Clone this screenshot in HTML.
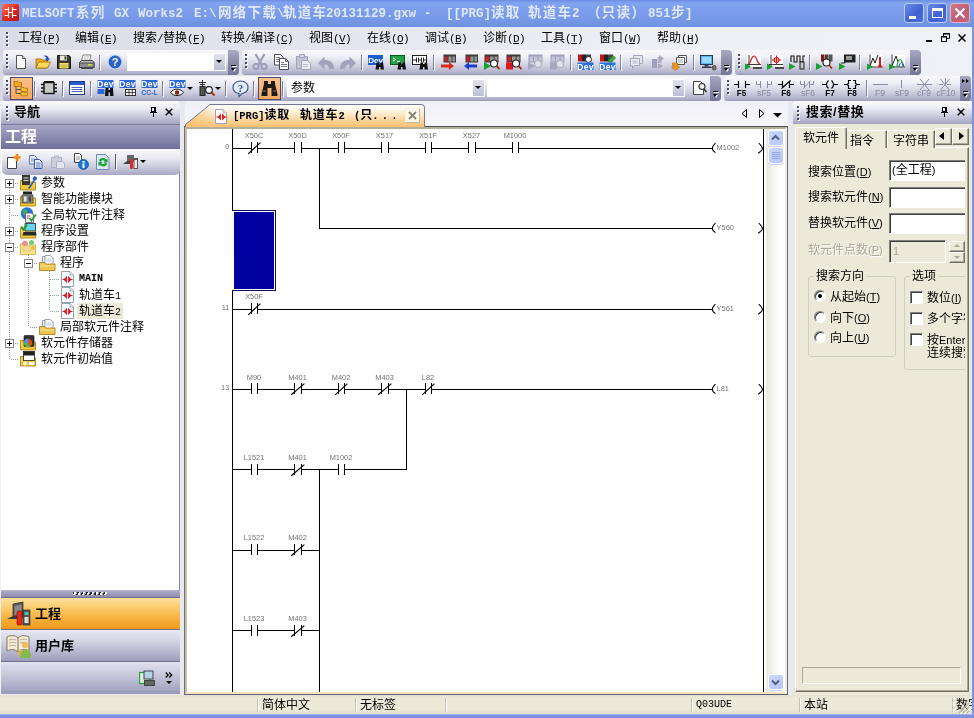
<!DOCTYPE html>
<html lang="zh-CN">
<head>
<meta charset="utf-8">
<title>MELSOFT GX Works2</title>
<style>
*{box-sizing:border-box;margin:0;padding:0}
html,body{width:974px;height:718px;overflow:hidden;background:#ece9d8}
body{font-family:"Liberation Sans","Noto Sans CJK SC",sans-serif;font-size:12px;color:#000;position:relative}
.a{position:absolute}
.mono{font-family:"Liberation Mono","Noto Sans CJK SC",monospace}
#win{position:absolute;left:0;top:0;width:974px;height:718px;overflow:hidden;will-change:transform;opacity:.9999}
/* title */
#title{left:0;top:0;width:974px;height:27px;background:linear-gradient(#6a8de2 0px,#82a4f0 3px,#7c9eec 9px,#7799e8 18px,#7093e2 25px,#6c8ede 27px)}
#title .t{position:absolute;top:6px;height:17px;line-height:17px;color:#dfe8fb;white-space:nowrap;font-weight:bold}
#title .l{font-family:"Liberation Mono",monospace;font-size:12.5px}
#title .c{font-family:"Noto Sans CJK SC",sans-serif;font-size:13.5px;letter-spacing:1.3px;top:3px}
.cb{position:absolute;top:3px;width:20px;height:20px;border:1px solid #b9cbf7;border-radius:3px;background:linear-gradient(135deg,#6a8ae8,#3f62d2 60%,#4c70de)}
/* menu */
#menu{left:0;top:27px;width:972px;height:23px;background:linear-gradient(90deg,#dcdce9,#efeff6 70%,#f0f0f7)}
#menu .m{position:absolute;top:4px;height:14px;line-height:14px;white-space:nowrap;font-size:12px}
#menu .m i{font-style:normal;font-family:"Liberation Mono",monospace;font-size:11px;letter-spacing:-.6px}
#menu .m u{text-decoration:underline}
.grip{position:absolute;width:3px}
.grip:before{content:"";position:absolute;left:1px;top:1px;width:2px;height:100%;background:repeating-linear-gradient(#fff 0,#fff 2px,transparent 2px,transparent 4px)}
.grip:after{content:"";position:absolute;left:0;top:0;width:2px;height:100%;background:repeating-linear-gradient(#4a4a68 0,#4a4a68 2px,transparent 2px,transparent 4px)}
</style>
</head>
<body>
<div id="win">
<div id="title" class="a">
 <svg class="a" style="left:2px;top:4px" width="17" height="17" viewBox="0 0 17 17"><defs><linearGradient id="lg1" x1="0" y1="0" x2="1" y2="1"><stop offset="0" stop-color="#ff7058"/><stop offset=".5" stop-color="#e42a20"/><stop offset="1" stop-color="#b81010"/></linearGradient></defs><rect x="0" y="0" width="17" height="17" rx="1.500" fill="url(#lg1)"/><path d="M2.500 5.500h4M6.500 3v5.500M10.500 3v5.500M10.500 5.500h4M2.500 11.500h4M6.500 9v5M10.500 9v5M10.500 11.500h4M6.500 8.500h4" stroke="#fff" stroke-width="1.200" fill="none"/></svg>
 <span class="t l" style="left:22px">MELSOFT</span><span class="t c" style="left:76px">系列</span>
 <span class="t l" style="left:114px">GX</span><span class="t l" style="left:138px">Works2</span>
 <span class="t l" style="left:194px">E:\</span><span class="t c" style="left:218px">网络下载</span><span class="t l" style="left:277px">\</span><span class="t c" style="left:283px">轨道车</span>
 <span class="t l" style="left:326px">20131129.gxw</span><span class="t l" style="left:424px">-</span>
 <span class="t l" style="left:446px">[[PRG]</span><span class="t c" style="left:491px">读取</span><span class="t c" style="left:528px">轨道车</span><span class="t l" style="left:572px">2</span>
 <span class="t c" style="left:587px">（只读）</span><span class="t l" style="left:648px">851</span><span class="t c" style="left:671px">步</span><span class="t l" style="left:685px">]</span>
 <div class="cb" style="left:904px"><div class="a" style="left:4px;top:12px;width:7px;height:3px;background:#fff"></div></div>
 <div class="cb" style="left:927px"><div class="a" style="left:4px;top:4px;width:11px;height:10px;border:1px solid #fff;border-top-width:3px"></div></div>
 <div class="cb" style="left:950px;background:linear-gradient(135deg,#d07a8c,#c05a72 60%,#c8687c);border-color:#e0b4c8"><svg class="a" style="left:3px;top:3px" width="12" height="12" viewBox="0 0 12 12"><path d="M1.5 1.5L10.5 10.5M10.5 1.5L1.5 10.5" stroke="#fff" stroke-width="2.2"/></svg></div>
</div>
<div class="a" style="left:972px;top:27px;width:2px;height:691px;background:#7a92e0"></div>
<div id="menu" class="a">
 <div class="grip" style="left:6px;top:5px;height:14px"></div>
 <span class="m" style="left:18px">工程<i>(<u>P</u>)</i></span>
 <span class="m" style="left:75px">编辑<i>(<u>E</u>)</i></span>
 <span class="m" style="left:133px">搜索<i>/</i>替换<i>(<u>F</u>)</i></span>
 <span class="m" style="left:221px">转换<i>/</i>编译<i>(<u>C</u>)</i></span>
 <span class="m" style="left:309px">视图<i>(<u>V</u>)</i></span>
 <span class="m" style="left:367px">在线<i>(<u>O</u>)</i></span>
 <span class="m" style="left:425px">调试<i>(<u>B</u>)</i></span>
 <span class="m" style="left:483px">诊断<i>(<u>D</u>)</i></span>
 <span class="m" style="left:541px">工具<i>(<u>T</u>)</i></span>
 <span class="m" style="left:599px">窗口<i>(<u>W</u>)</i></span>
 <span class="m" style="left:657px">帮助<i>(<u>H</u>)</i></span>
 <div class="a" style="left:926px;top:13px;width:6px;height:2px;background:#000"></div>
 <svg class="a" style="left:941px;top:6px" width="9" height="10" viewBox="0 0 9 10"><path d="M2.5 3V0.5H8.5V5.5H6" stroke="#000" fill="none"/><rect x="0.5" y="3.5" width="5" height="5" fill="none" stroke="#000"/><path d="M0 4h6M2 1h7" stroke="#000"/></svg>
 <svg class="a" style="left:958px;top:7px" width="8" height="8" viewBox="0 0 8 8"><path d="M0.5 0.5L7.5 7.5M7.5 0.5L0.5 7.5" stroke="#000" stroke-width="1.5"/></svg>
</div>
<style>
#dock{left:0;top:50px;width:972px;height:51px;background:linear-gradient(90deg,#d9d9e7,#ececf4 70%,#f0f0f7)}
.tb{position:absolute;height:25px;border-radius:3px 4px 4px 3px;background:linear-gradient(#f9f9fc 0,#f0f0f7 25%,#d3d3e3 60%,#b3b3cc 90%,#9c9cb9 100%)}
.opt{position:absolute;top:0;right:0;width:11px;height:25px;border-radius:0 4px 4px 0;background:linear-gradient(#a9a9c3,#8a8aa9 50%,#77779a)}
.opt:after{content:"";position:absolute;left:3px;top:18px;border:2.500px solid transparent;border-top:3px solid #000;border-bottom:0}
.opt:before{content:"";position:absolute;left:3px;top:15px;width:5px;height:1px;background:#000;box-shadow:1px 1px 0 #fff}
.opt i{position:absolute;left:4px;top:19px;border:2.500px solid transparent;border-top:3px solid #fff;border-bottom:0}
.sep{position:absolute;top:5px;width:1px;height:15px;margin-left:-1px;background:#7d7d9c;box-shadow:1px 1px 0 #fff}
.ic{position:absolute;width:16px;height:16px;top:4px}
.ic svg{display:block;overflow:visible}
.sel{position:absolute;top:1px;width:23px;height:23px;border:1px solid #4b4b6f;background:linear-gradient(#fbc08a,#f9a860)}
.cmb{position:absolute;top:3px;height:18px;background:#fff;border:1px solid #fff}
.cmb .dd{position:absolute;right:0;top:0;width:11px;height:16px;background:linear-gradient(#e2e2ee,#bcbcd4)}
.cmb .dd:after{content:"";position:absolute;left:2px;top:6px;border:3px solid transparent;border-top:3px solid #000;border-bottom:0}
.ft{font:bold 8.2px "Liberation Sans",sans-serif;fill:#000}
.fg{font:8.5px "Liberation Sans",sans-serif;fill:#8686a2}
</style>
<div id="dock" class="a">
<!-- row 1 toolbar A -->
<div class="tb" style="left:3px;top:0;width:236px">
 <div class="grip" style="left:3px;top:4px;height:16px"></div>
 <div class="ic" style="left:10px"><svg width="16" height="16" viewBox="0 0 16 16"><path d="M3.5 1.5h6l3 3v10h-9z" fill="#fff" stroke="#555" /><path d="M9.5 1.5v3h3" fill="#e8e8e8" stroke="#555"/></svg></div>
 <div class="ic" style="left:32px"><svg width="16" height="16" viewBox="0 0 16 16"><path d="M1 5h5l1 1h5v8H1z" fill="#f2b31c" stroke="#a06a00" stroke-width=".8"/><path d="M1 14l2.5-6h12l-3 6z" fill="#ffd85a" stroke="#a06a00" stroke-width=".8"/><path d="M8 2c3-1.5 5.5 0 5.500 2.500h1.600l-2.600 3-2.600-3h1.600c0-1.500-1.500-2.500-3.500-2.500z" fill="#1a4fc0"/></svg></div>
 <div class="ic" style="left:53px"><svg width="16" height="16" viewBox="0 0 16 16"><path d="M1.500 1.500h11.500l1.500 1.500v11.500h-13z" fill="#3b3b2c" stroke="#1a1a10"/><rect x="4" y="1.500" width="7" height="5" fill="#e8e8e0"/><rect x="8.500" y="2.300" width="1.800" height="3.300" fill="#3b3b2c"/><rect x="3.500" y="9" width="9" height="5.500" fill="#f0e070"/><path d="M4.500 11h7M4.500 13h7" stroke="#b09830" stroke-width=".8"/></svg></div>
 <div class="ic" style="left:75px"><svg width="17" height="16" viewBox="0 0 17 16"><path d="M5 1h8l-1.500 6h-8z" fill="#fff" stroke="#666" stroke-width=".8"/><path d="M6 3h5M5.500 5h5" stroke="#999" stroke-width=".7"/><path d="M1.500 8.500l2-2h11l1.500 2v4.500h-14.500z" fill="#bdbdbd" stroke="#4a4a4a"/><rect x="1.500" y="9" width="14.500" height="4.500" fill="#8e8e8e" stroke="#4a4a4a"/><rect x="10" y="10" width="4" height="1.500" fill="#c8e050"/><path d="M3 14.500h12" stroke="#4a4a4a"/></svg></div>
 <div class="sep" style="left:97px"></div>
 <div class="ic" style="left:104px"><svg width="16" height="16" viewBox="0 0 16 16"><circle cx="8" cy="8" r="7" fill="#2a62c8" stroke="#c8d8f4" stroke-width="1.2"/><text x="8" y="12" text-anchor="middle" style="font:bold 11px 'Liberation Sans',sans-serif" fill="#fff">?</text></svg></div>
 <div class="cmb" style="left:124px;width:99px"><div class="dd"></div></div>
 <div class="opt"><i></i></div>
</div>
<!-- row 1 toolbar B -->
<div class="tb" style="left:242px;top:0;width:490px">
 <div class="grip" style="left:3px;top:4px;height:16px"></div>
 <div class="ic" style="left:10px"><svg width="16" height="16" viewBox="0 0 16 16"><path d="M3.500 0l6 10.500M12.500 0L6.500 10.500" stroke="#9c9cb6" stroke-width="2.200" fill="none"/><circle cx="4" cy="12.500" r="2.600" fill="none" stroke="#9c9cb6" stroke-width="1.900"/><circle cx="12" cy="12.500" r="2.600" fill="none" stroke="#9c9cb6" stroke-width="1.900"/></svg></div>
 <div class="ic" style="left:32px"><svg width="16" height="16" viewBox="0 0 16 16"><path d="M0.500 0.500h6l2.500 2.500v8h-8.500z" fill="#fff" stroke="#4a4a5a"/><path d="M2 3.500h4M2 5.500h5M2 7.500h3" stroke="#667" stroke-width=".9"/><path d="M5.500 4.500h6l3 3v8h-9z" fill="#fff" stroke="#4a4a5a"/><path d="M11.500 4.500v3h3" fill="none" stroke="#4a4a5a" stroke-width=".8"/><path d="M7 8.500h3M7 10.500h6M7 12.500h6" stroke="#667" stroke-width=".9"/></svg></div>
 <div class="ic" style="left:54px"><svg width="16" height="16" viewBox="0 0 16 16"><path d="M0.500 2.500h11v12h-11z" fill="#c4c4d6" stroke="#a2a2ba"/><path d="M3.500 0.500h5v3h-5z" fill="#d4d4e2" stroke="#a2a2ba"/><path d="M5.500 6.500h6l3 3v6h-9z" fill="#ececf3" stroke="#a2a2ba"/><path d="M7 10.500h5M7 12.500h5" stroke="#b8b8cc" stroke-width=".9"/></svg></div>
 <div class="ic" style="left:76px"><svg width="16" height="16" viewBox="0 0 16 16"><path d="M0 9l6.500-6.500v3.500c5.500 0 9.500 2 9.500 9h-5c0-3-1.500-4.500-4.500-4.500v5z" fill="#a2a2bc"/></svg></div>
 <div class="ic" style="left:98px"><svg width="16" height="16" viewBox="0 0 16 16"><path d="M16 9l-6.500-6.500v3.500c-5.500 0-9.500 2-9.500 9h5c0-3 1.500-4.500 4.500-4.500v5z" fill="#a2a2bc"/></svg></div>
 <div class="sep" style="left:120px"></div>
 <div class="ic" style="left:126px"><svg width="16" height="16" viewBox="0 0 16 16"><rect x="0" y="1" width="15" height="10" fill="#1c5ed0"/><text x="7.500" y="8.500" text-anchor="middle" style="font:bold 8px 'Liberation Sans',sans-serif" fill="#fff">Dev</text><path d="M8.500 8.500h2.500v7h-3.500zM12.500 8.500h2.500l1 7h-3.500z" fill="#111"/><rect x="10.500" y="10.500" width="2.500" height="2.500" fill="#111"/></svg></div>
 <div class="ic" style="left:148px"><svg width="16" height="16" viewBox="0 0 16 16"><rect x="0.500" y="1.500" width="14" height="9" fill="#28a048" stroke="#0a5a20"/><path d="M3 4l2.500 1.500L3 7M7 7.500h3" stroke="#fff" fill="none"/><path d="M8.500 8.500h2.500v7h-3.500zM12.500 8.500h2.500l1 7h-3.500z" fill="#111"/><rect x="10.500" y="10.500" width="2.500" height="2.500" fill="#111"/></svg></div>
 <div class="ic" style="left:170px"><svg width="16" height="16" viewBox="0 0 16 16"><rect x="0.500" y="1.500" width="14" height="9" fill="#fff" stroke="#222"/><path d="M1 6h3.500M4.500 3.500v5M6.500 3.500v5M6.500 6h3M9.500 3.500v5M11.500 3.500v5M11.500 6h3" stroke="#111" stroke-width=".9"/><path d="M8.500 8.500h2.500v7h-3.500zM12.500 8.500h2.500l1 7h-3.500z" fill="#111"/><rect x="10.500" y="10.500" width="2.500" height="2.500" fill="#111"/></svg></div>
 <div class="sep" style="left:192px"></div>
 <div class="ic" style="left:198px"><svg width="16" height="16" viewBox="0 0 16 16"><rect x="3.500" y="0.500" width="12.500" height="8" fill="#3a3a3a"/><rect x="4.500" y="2.500" width="3" height="5" fill="#d02020"/><rect x="8.500" y="2.500" width="3" height="5" fill="#9a9a9a"/><rect x="12.500" y="2.500" width="2.500" height="5" fill="#9a9a9a"/><path d="M1 10.500h8v-2.500l5 4-5 4v-2.500h-8z" fill="#e02818"/></svg></div>
 <div class="ic" style="left:220px"><svg width="16" height="16" viewBox="0 0 16 16"><rect x="3.500" y="0.500" width="12.500" height="8" fill="#3a3a3a"/><rect x="4.500" y="2.500" width="3" height="5" fill="#d02020"/><rect x="8.500" y="2.500" width="3" height="5" fill="#9a9a9a"/><rect x="12.500" y="2.500" width="2.500" height="5" fill="#9a9a9a"/><path d="M15 10.500h-8v-2.500l-5 4 5 4v-2.500h8z" fill="#1840d0"/></svg></div>
 <div class="ic" style="left:242px"><svg width="16" height="16" viewBox="0 0 16 16"><rect x="0.500" y="0.500" width="14" height="8" fill="#3a3a3a"/><rect x="1.500" y="2.500" width="3.500" height="5" fill="#d02020"/><rect x="6" y="2.500" width="3.500" height="5" fill="#9a9a9a"/><rect x="10.500" y="2.500" width="3" height="5" fill="#9a9a9a"/><path d="M0 8l7 4-7 4z" fill="#18a030"/><circle cx="10" cy="9.500" r="3.500" fill="#fff" stroke="#222" stroke-width="1.200"/><path d="M12.500 12l3 3" stroke="#a03010" stroke-width="1.800"/></svg></div>
 <div class="ic" style="left:264px"><svg width="16" height="16" viewBox="0 0 16 16"><rect x="0.500" y="0.500" width="14" height="8" fill="#3a3a3a"/><rect x="1.500" y="2.500" width="3.500" height="5" fill="#d02020"/><rect x="6" y="2.500" width="3.500" height="5" fill="#9a9a9a"/><rect x="10.500" y="2.500" width="3" height="5" fill="#9a9a9a"/><rect x="0" y="8.500" width="7" height="7" fill="#e01818"/><circle cx="10" cy="9.500" r="3.500" fill="#fff" stroke="#222" stroke-width="1.200"/><path d="M12.500 12l3 3" stroke="#a03010" stroke-width="1.800"/></svg></div>
 <div class="ic" style="left:286px"><svg width="16" height="16" viewBox="0 0 16 16"><rect x="0.500" y="0.500" width="14" height="8" fill="#a2a2ba"/><rect x="1.500" y="2.500" width="3.500" height="5" fill="#c4c4d6"/><rect x="6" y="2.500" width="3.500" height="5" fill="#c4c4d6"/><rect x="10.500" y="2.500" width="3" height="5" fill="#c4c4d6"/><path d="M0 8l7 4-7 4z" fill="#a6a6bd"/><circle cx="10" cy="10" r="3.500" fill="#e0e0ea" stroke="#b0b0c4" stroke-width="1.200"/></svg></div>
 <div class="ic" style="left:308px"><svg width="16" height="16" viewBox="0 0 16 16"><rect x="0.500" y="0.500" width="14" height="8" fill="#a2a2ba"/><rect x="1.500" y="2.500" width="3.500" height="5" fill="#c4c4d6"/><rect x="6" y="2.500" width="3.500" height="5" fill="#c4c4d6"/><rect x="10.500" y="2.500" width="3" height="5" fill="#c4c4d6"/><rect x="0" y="8.500" width="7" height="7" fill="#a6a6bd"/><circle cx="10" cy="10" r="3.500" fill="#e0e0ea" stroke="#b0b0c4" stroke-width="1.200"/></svg></div>
 <div class="sep" style="left:329px"></div>
 <div class="ic" style="left:335px"><svg width="17" height="16" viewBox="0 0 17 16"><rect x="1" y="0.500" width="4" height="7" fill="#c01818"/><rect x="5" y="0.500" width="4" height="7" fill="#222"/><rect x="9" y="0.500" width="5" height="7" fill="#444"/><circle cx="11.500" cy="5.500" r="3" fill="#fff" stroke="#222"/><rect x="0.500" y="8.500" width="16" height="7.500" fill="#2a70e0"/><text x="8.500" y="15.500" text-anchor="middle" style="font:bold 8.5px 'Liberation Sans',sans-serif;letter-spacing:.3px" fill="#fff">Dev</text></svg></div>
 <div class="ic" style="left:357px"><svg width="17" height="16" viewBox="0 0 17 16"><rect x="1" y="0.500" width="4" height="7" fill="#c01818"/><rect x="5" y="0.500" width="4" height="7" fill="#222"/><rect x="9" y="0.500" width="5" height="7" fill="#444"/><path d="M9 7l5-5.500 2.500 2.500-5 5z" fill="#38b038" stroke="#106010" stroke-width=".6"/><rect x="0.500" y="8.500" width="16" height="7.500" fill="#2a70e0"/><text x="8.500" y="15.500" text-anchor="middle" style="font:bold 8.5px 'Liberation Sans',sans-serif;letter-spacing:.3px" fill="#fff">Dev</text></svg></div>
 <div class="sep" style="left:379px"></div>
 <div class="ic" style="left:386px"><svg width="16" height="16" viewBox="0 0 16 16"><path d="M5.500 1.500h9v8h-9z" fill="#e6e6ee" stroke="#a4a4bc"/><path d="M2.500 4.500h9v7h-5l-2 3v-3h-2z" fill="#ececf3" stroke="#a4a4bc"/><path d="M4.500 7h5M4.500 9h5" stroke="#b4b4c8"/></svg></div>
 <div class="ic" style="left:408px"><svg width="16" height="16" viewBox="0 0 16 16"><rect x="2" y="5" width="5" height="9" fill="#a0a0b8"/><rect x="7.500" y="3" width="4" height="6" fill="#b4b4c8"/><path d="M9 1l5 3.500-5 3.500zM8 9l5 3-5 3z" fill="#a8a8c0"/></svg></div>
 <div class="ic" style="left:430px"><svg width="16" height="16" viewBox="0 0 16 16"><path d="M6.500 1.500h8v7h-8z" fill="#fff" stroke="#555"/><path d="M4.500 3.500h8v7h-8z" fill="#fff" stroke="#555"/><path d="M6 6h5M6 8h5" stroke="#888" stroke-width=".8"/><path d="M1 8h5v-2l0 0v8h-2.500l-2.500-3h2.500z" fill="none"/><path d="M0.500 9h5v4h2.500l-5 3.500-3.500-3.500h2.500v-1.500h-1.500z" fill="#f39a18" stroke="#c06a00" stroke-width=".6"/></svg></div>
 <div class="sep" style="left:452px"></div>
 <div class="ic" style="left:457px"><svg width="18" height="17" viewBox="0 0 18 17"><rect x="1.500" y="1.500" width="12" height="9" fill="#58b4f4" stroke="#2a3a5a"/><rect x="3" y="3" width="9" height="6" fill="#9ad8ff"/><rect x="5.500" y="11" width="4" height="1.500" fill="#445"/><rect x="3" y="12.500" width="9" height="1.500" fill="#334"/><path d="M12 13.500h3" stroke="#445"/><rect x="13.500" y="11.500" width="3.500" height="4.500" rx="1.500" fill="#777" stroke="#333" stroke-width=".7"/></svg></div>
 <div class="opt"><i></i></div>
</div>
<!-- row 1 toolbar C -->
<div class="tb" style="left:735px;top:0;width:186px">
 <div class="grip" style="left:3px;top:4px;height:16px"></div>
 <div class="ic" style="left:10px"><svg width="17" height="16" viewBox="0 0 17 16"><rect x="2" y="1" width="14" height="12" fill="#fff"/><path d="M4 1v12M2 10.500h14" stroke="#222" stroke-width=".9"/><path d="M3 10c3 0 3-8 6-8s3 8 6 8" stroke="#e01818" stroke-width="1.200" fill="none"/><path d="M0 9.500l6 3.200-6 3.300z" fill="#18a030"/><path d="M8 14h9" stroke="#222" stroke-width="1.500"/></svg></div>
 <div class="ic" style="left:32px"><svg width="17" height="16" viewBox="0 0 17 16"><rect x="2" y="1" width="14" height="12" fill="#fff"/><path d="M4 1v12M2 10.500h14" stroke="#222" stroke-width=".9"/><circle cx="9.500" cy="6" r="2.500" fill="none" stroke="#e01818" stroke-width="1.100"/><path d="M9.500 1.500v9M5 6h9" stroke="#e01818" stroke-width="1"/><path d="M0 9.500l6 3.200-6 3.300z" fill="#18a030"/><path d="M8 14h9" stroke="#222" stroke-width="1.500"/></svg></div>
 <div class="ic" style="left:54px"><svg width="17" height="16" viewBox="0 0 17 16"><path d="M2 8v-6h3v6h3v-6h3v6h3v-6h2" stroke="#111" stroke-width="1.100" fill="none"/><rect x="11" y="8" width="4" height="7" fill="#c8c8c8" stroke="#222"/><path d="M0 9l6.500 3.400-6.500 3.600z" fill="#18a030"/></svg></div>
 <div class="sep" style="left:75px"></div>
 <div class="ic" style="left:81px"><svg width="17" height="16" viewBox="0 0 17 16"><rect x="5" y="0.500" width="3.500" height="7" fill="#8a1818"/><rect x="9" y="0.500" width="3.500" height="7" fill="#444"/><rect x="13" y="0.500" width="3.500" height="7" fill="#555"/><circle cx="10.500" cy="8.500" r="3.500" fill="#fff" stroke="#222" stroke-width="1.200"/><path d="M13 11l3 3.500" stroke="#a03010" stroke-width="1.800"/><path d="M0 9l6.500 3.400-6.500 3.600z" fill="#18a030"/></svg></div>
 <div class="ic" style="left:104px"><svg width="17" height="16" viewBox="0 0 17 16"><rect x="5" y="0.500" width="11.500" height="8" fill="#222"/><rect x="7" y="2" width="6" height="4" fill="#999"/><path d="M2 9h4v-2" stroke="#222" fill="none"/><path d="M0 9l6.500 3.400-6.500 3.600z" fill="#18a030"/></svg></div>
 <div class="sep" style="left:125px"></div>
 <div class="ic" style="left:132px"><svg width="17" height="16" viewBox="0 0 17 16"><rect x="2" y="0.500" width="14" height="13" fill="#fff"/><path d="M3 0.500v13M2 13h14" stroke="#222" stroke-width=".9"/><path d="M3 12l3-8 2 5 3-8" stroke="#222" stroke-width="1" fill="none"/><rect x="12" y="3" width="2" height="8" fill="#e01818"/><circle cx="13" cy="12" r="1.800" fill="#e01818"/><path d="M0 9.500l6 3.200-6 3.300z" fill="#18a030"/></svg></div>
 <div class="ic" style="left:154px"><svg width="17" height="16" viewBox="0 0 17 16"><rect x="2" y="0.500" width="14" height="13" fill="#fff"/><path d="M3 0.500v13M2 13h14" stroke="#222" stroke-width=".9"/><path d="M3 12l4-10 2 6" stroke="#222" stroke-width="1" fill="none"/><path d="M8 13c1-10 5-10 6 0" stroke="#18a030" stroke-width="1.200" fill="none"/><path d="M10 13c1-6 4-6 5 0" stroke="#2848d0" stroke-width="1" fill="none"/><path d="M0 9.500l6 3.200-6 3.300z" fill="#18a030"/></svg></div>
 <div class="opt"><i></i></div>
</div>
<!-- row 2 toolbar A -->
<div class="tb" style="left:3px;top:26px;width:718px">
 <div class="grip" style="left:3px;top:4px;height:16px"></div>
 <div class="sel" style="left:7px"></div>
 <div class="ic" style="left:10px"><svg width="16" height="16" viewBox="0 0 16 16"><path d="M1 1.500h4l1 1h2.500v4h-7.500z" fill="#f0a818" stroke="#9a6800" stroke-width=".7"/><path d="M3 6.500v7h5M3 9.500h5" stroke="#555" fill="none"/><path d="M8 7.500h3l.8.800h2.700v3.200h-6.500z" fill="#f6c030" stroke="#9a6800" stroke-width=".7"/><path d="M8 12h3l.8.800h2.700v3h-6.500z" fill="#f6c030" stroke="#9a6800" stroke-width=".7"/></svg></div>
 <div class="sep" style="left:32px"></div>
 <div class="ic" style="left:38px"><svg width="16" height="16" viewBox="0 0 16 16"><rect x="3" y="2.500" width="10" height="11" fill="#c8c8c8" stroke="#111" stroke-width="1.400"/><path d="M0 4.500h3M0 8h3M0 11.500h3M13 4.500h3M13 8h3M13 11.500h3" stroke="#111" stroke-width="1.600"/><path d="M3 2h10" stroke="#111" stroke-width="2"/></svg></div>
 <div class="sep" style="left:60px"></div>
 <div class="ic" style="left:66px"><svg width="16" height="16" viewBox="0 0 16 16"><rect x="0.500" y="1.500" width="15" height="13" fill="#fff" stroke="#223a80"/><rect x="1" y="2" width="14" height="3" fill="#2a5ad0"/><path d="M2.500 7.500h11M2.500 9.500h11M2.500 11.500h11" stroke="#4a6ac0"/></svg></div>
 <div class="sep" style="left:88px"></div>
 <div class="ic" style="left:94px"><svg width="17" height="16" viewBox="0 0 17 16"><rect x="0.500" y="0" width="16" height="8" fill="#2a68d8"/><text x="8.500" y="7.300" text-anchor="middle" style="font:bold 8.5px 'Liberation Sans',sans-serif;letter-spacing:.3px" fill="#fff">Dev</text><rect x="0.500" y="9" width="7" height="5" fill="#2a68d8"/><path d="M8.500 8h3v8h-3.500zM13 8h3l.5 8h-3.500z" fill="#111"/><rect x="11" y="10" width="2.500" height="2.500" fill="#111"/></svg></div>
 <div class="ic" style="left:116px"><svg width="17" height="16" viewBox="0 0 17 16"><rect x="0.500" y="0" width="16" height="8" fill="#2a68d8"/><text x="8.500" y="7.300" text-anchor="middle" style="font:bold 8.5px 'Liberation Sans',sans-serif;letter-spacing:.3px" fill="#fff">Dev</text><rect x="6.500" y="9.500" width="10" height="6" fill="#fff" stroke="#333"/><path d="M6.500 12.500h10M10 9.500v6M13.300 9.500v6" stroke="#333" stroke-width=".9"/></svg></div>
 <div class="ic" style="left:138px"><svg width="17" height="16" viewBox="0 0 17 16"><rect x="0.500" y="0" width="16" height="8" fill="#2a68d8"/><text x="8.500" y="7.300" text-anchor="middle" style="font:bold 8.5px 'Liberation Sans',sans-serif;letter-spacing:.3px" fill="#fff">Dev</text><text x="8.500" y="15.300" text-anchor="middle" style="font:bold 7px 'Liberation Sans',sans-serif" fill="#2a68d8">CC-L</text></svg></div>
 <div class="sep" style="left:160px"></div>
 <div class="ic" style="left:166px"><svg width="17" height="16" viewBox="0 0 17 16"><rect x="0.500" y="0" width="16" height="8" fill="#2a68d8"/><text x="8.500" y="7.300" text-anchor="middle" style="font:bold 8.5px 'Liberation Sans',sans-serif;letter-spacing:.3px" fill="#fff">Dev</text><path d="M1.500 12.500c3-4.500 10-4.500 13 0c-3 4-10 4-13 0z" fill="#fff" stroke="#111"/><circle cx="8" cy="12.500" r="2.200" fill="#7a2a10"/></svg></div>
 <div class="a" style="left:184px;top:11px;border:3px solid transparent;border-top:3px solid #000;border-bottom:0"></div>
 <div class="ic" style="left:195px"><svg width="17" height="16" viewBox="0 0 17 16"><path d="M4.500 0v6M1 2.500h7M2 4.500h5" stroke="#333" stroke-width="1"/><rect x="2" y="6.500" width="5" height="9" fill="#555" stroke="#222"/><circle cx="11" cy="10" r="3.300" fill="#fff" stroke="#222" stroke-width="1.200"/><path d="M13.500 12.500l3 3" stroke="#a03010" stroke-width="1.800"/></svg></div>
 <div class="a" style="left:212px;top:11px;border:3px solid transparent;border-top:3px solid #000;border-bottom:0"></div>
 <div class="sep" style="left:223px"></div>
 <div class="ic" style="left:229px"><svg width="17" height="17" viewBox="0 0 17 17"><path d="M8.500 1c4.500 0 7.500 2.800 7.500 6.300c0 3.200-2.500 5.700-6 6.200l-3 3v-3c-3.500-.5-6-3-6-6.200c0-3.500 3-6.300 7.500-6.300z" fill="#e4eefc" stroke="#3a5a8a" stroke-width="1.200"/><text x="8.500" y="11.500" text-anchor="middle" style="font:bold 11px 'Liberation Serif',serif" fill="#2a4ab0">?</text></svg></div>
 <div class="sep" style="left:251px"></div>
 <div class="sel" style="left:255px"></div>
 <div class="ic" style="left:258px"><svg width="17" height="16" viewBox="0 0 17 16"><path d="M3 1h4v3h3v-3h4v3l2.500 10v2h-6v-8h-4v8h-6v-2l2.500-10z" fill="#1c1c1c"/><path d="M2 11h3M12 11h3" stroke="#777"/></svg></div>
 <div class="sep" style="left:280px"></div>
 <div class="cmb" style="left:284px;width:198px"><span class="a" style="left:3px;top:1px;line-height:15px">参数</span><div class="dd"></div></div>
 <div class="cmb" style="left:484px;width:198px"><div class="dd"></div></div>
 <div class="ic" style="left:688px"><svg width="17" height="16" viewBox="0 0 17 16"><path d="M2.500 1.500h7l3 3v10h-10z" fill="#fff" stroke="#444"/><circle cx="11" cy="6.500" r="3" fill="#eee" stroke="#333" stroke-width="1.100"/><path d="M13 9l2.500 3" stroke="#333" stroke-width="1.600"/></svg></div>
 <div class="opt"><i></i></div>
</div>
<!-- row 2 toolbar B (ladder symbols) -->
<div class="tb" style="left:724px;top:26px;width:248px;border-radius:3px 0 0 3px">
 <div class="grip" style="left:3px;top:4px;height:16px"></div>
 <svg class="a" style="left:6px;top:1px" width="232" height="23" viewBox="0 0 232 23">
  <g stroke="#000" stroke-width="1.150" fill="none">
   <path d="M4 7.500h4.500M8.500 4v7M15.500 4v7M15.500 7.500h4.500"/>
   <path d="M48 7.500h4.500M52.500 4v7M59.500 4v7M59.500 7.500h4.500M51.500 11.500l9-8"/>
   <path d="M92 7.500h4M104 7.500h4M98.500 3.500c-2.700 2.500-2.700 5.500 0 8M101.500 3.500c2.700 2.500 2.700 5.500 0 8"/>
   <path d="M114 7.500h4M126 7.500h4M121 3.500h-2.500v3l-1.500 1 1.500 1v3h2.500M123 3.500h2.500v3l1.500 1-1.500 1v3h-2.500"/>
  </g>
  <g stroke="#8c8ca8" stroke-width="1" fill="none">
   <path d="M26.500 4v3.500h4M30.500 4v7M37.500 4v7M37.500 7.500h4v-3.500"/>
   <path d="M70.500 4v3.500h4M74.500 4v7M79.500 4v7M79.500 7.500h4v-3.500M73.500 11.500l7-8"/>
   <path d="M143 7.500h15"/>
   <path d="M171.500 3v8"/>
   <path d="M187 7.500h15M190 2l9 11M199 2l-9 11"/>
   <path d="M210.500 2l9 11M219.500 2l-9 11M215.500 1v7M209 7.500h4M217 7.500h4"/>
  </g>
  <path d="M136.500 3v16" stroke="#7d7d9c"/><path d="M137.500 4v16" stroke="#fff"/>
  <text class="ft" x="11.500" y="19" text-anchor="middle">F5</text>
  <text class="fg" x="34" y="19" text-anchor="middle">sF5</text>
  <text class="ft" x="56" y="19" text-anchor="middle">F6</text>
  <text class="fg" x="78" y="19" text-anchor="middle">sF6</text>
  <text class="ft" x="100" y="19" text-anchor="middle">F7</text>
  <text class="ft" x="122" y="19" text-anchor="middle">F8</text>
  <text class="fg" x="150" y="19" text-anchor="middle">F9</text>
  <text class="fg" x="172" y="19" text-anchor="middle">sF9</text>
  <text class="fg" x="194" y="19" text-anchor="middle">cF9</text>
  <text class="fg" x="216" y="19" text-anchor="middle">cF10</text>
 </svg>
 <div class="opt" style="right:1px;border-radius:0 3px 4px 0"><i></i><span class="a" style="left:2px;top:3px;width:0;height:0;border:2.500px solid transparent;border-left:3px solid #000;border-right:0"></span><span class="a" style="left:6px;top:3px;width:0;height:0;border:2.500px solid transparent;border-left:3px solid #000;border-right:0"></span></div>
</div>
</div>
<style>
#main{left:0;top:101px;width:972px;height:594px;background:#e9e9f3}
.cap{position:absolute;height:23px;background:linear-gradient(#fbfbfd 0,#ededf5 30%,#c6c6da 70%,#a4a4c0 100%);border-radius:3px 3px 0 0}
.cap b{position:absolute;left:13px;top:3px;font-size:13px;line-height:16px;font-weight:bold}
#nav{left:0;top:0;width:180px;height:593px;background:#fff;border-left:1px solid #f0f0f6;border-right:1px solid #8585aa}
#nhead{left:0;top:23px;width:180px;height:25px;background:linear-gradient(#a6a6c6 0,#9393b6 35%,#7e7ea5 75%,#6e6e98 100%);border-top:1px solid #7c7ca0}
#nhead b{position:absolute;left:4px;top:2px;color:#fff;font-size:16px;line-height:19px;font-weight:bold}
#ntb{left:1px;top:48px;width:178px;height:26px;border-radius:0 0 5px 5px;background:linear-gradient(#fbfbfd 0,#e9e9f2 35%,#c4c4d9 75%,#a6a6c2 100%)}
#tree{left:1px;top:74px;width:177px;height:415px;background:#fff}
.tr{position:absolute;height:16px;line-height:16px;white-space:nowrap;font-size:12px}
.pm{position:absolute;width:9px;height:9px;border:1px solid #848484;background:#fff}
.pm:before{content:"";position:absolute;left:1px;top:3px;width:5px;height:1px;background:#000}
.pm.p:after{content:"";position:absolute;left:3px;top:1px;width:1px;height:5px;background:#000}
.ti{position:absolute;width:16px;height:16px}
.dot{position:absolute;background-image:linear-gradient(#9a9a9a 50%,transparent 50%);background-size:1px 2px;width:1px}
.doth{position:absolute;background-image:linear-gradient(90deg,#9a9a9a 50%,transparent 50%);background-size:2px 1px;height:1px}
.obtn{position:absolute;left:0;width:179px;height:32px;border-top:1px solid #6f6f94}
.obtn b{position:absolute;left:34px;top:7px;font-size:13px;line-height:17px;font-weight:bold}
</style>
<div id="main" class="a">
<div id="nav" class="a">
 <div class="cap" style="left:0;top:0;width:180px"><div class="grip" style="left:5px;top:5px;height:16px"></div><b>导航</b>
  <svg class="a" style="left:149px;top:6px" width="8" height="10" viewBox="0 0 8 10" shape-rendering="crispEdges"><path d="M1.500 0.500h4v4h-4zM4.500 0.500v4M0 5.500h7M3.500 6v4" stroke="#000" fill="none"/></svg>
  <svg class="a" style="left:164px;top:7px" width="8" height="8" viewBox="0 0 8 8"><path d="M0.700 0.700L7.300 7.300M7.300 0.700L0.700 7.300" stroke="#000" stroke-width="1.500"/></svg>
 </div>
 <div id="nhead" class="a"><b>工程</b></div>
 <div id="ntb" class="a">
  <div class="ic" style="left:4px;top:5px"><svg width="17" height="16" viewBox="0 0 17 16"><path d="M1.500 3.500h9v11h-9z" fill="#fff" stroke="#444"/><path d="M11 0v7M7.500 3.500h7" stroke="#f08a18" stroke-width="2.600"/></svg></div>
  <div class="ic" style="left:26px;top:5px"><svg width="16" height="16" viewBox="0 0 16 16"><path d="M1.500 1.500h5l2.500 2.500v6h-7.500z" fill="#e8f0fc" stroke="#5a7ab8"/><path d="M3 5h4M3 7h4" stroke="#5a7ab8" stroke-width=".8"/><path d="M6.500 5.500h5l2.500 2.500v6.500h-7.500z" fill="#e8f0fc" stroke="#3a5aa8"/><path d="M8 9h4.500M8 11h4.500M8 13h4.500" stroke="#3a5aa8" stroke-width=".8"/></svg></div>
  <div class="ic" style="left:48px;top:5px"><svg width="16" height="16" viewBox="0 0 16 16"><path d="M1.500 3.500h10v10h-10z" fill="#d0d0de" stroke="#b0b0c6"/><rect x="4" y="1.500" width="5" height="3" fill="#c0c0d2"/><path d="M6.500 7.500h6l2 2v5h-8z" fill="#e4e4ee" stroke="#b0b0c6"/></svg></div>
  <div class="ic" style="left:71px;top:4px"><svg width="17" height="18" viewBox="0 0 17 18"><path d="M1.500 0.500h5l2 2v7h-7z" fill="#fff" stroke="#444"/><path d="M3 4h4M3 6h4" stroke="#777" stroke-width=".8"/><circle cx="10.500" cy="11.500" r="5" fill="#1c78d0" stroke="#0a4a98" stroke-width=".7"/><rect x="9.500" y="10.500" width="2" height="4.500" fill="#fff"/><rect x="9.500" y="8" width="2" height="1.800" fill="#fff"/></svg></div>
  <div class="ic" style="left:94px;top:5px"><svg width="14" height="16" viewBox="0 0 14 16"><path d="M0.500 0.500h9l3.500 3.500v11.500h-12.500z" fill="#dce8f8" stroke="#6a8ac0"/><path d="M3 7c0-3 5-4 7-1.500l1.500-1v4h-4l1.300-1.300c-1.500-1.500-3.800-1-3.800.8zM11 9.500c0 3-5 4-7 1.500l-1.500 1v-4h4l-1.300 1.300c1.500 1.500 3.800 1 3.800-.8z" fill="#18a830"/></svg></div>
  <div class="sep" style="left:114px;top:5px;height:15px;background:#555"></div>
  <div class="ic" style="left:121px;top:5px"><svg width="18" height="16" viewBox="0 0 18 16"><path d="M4 1h7v7h-7z" fill="#666"/><path d="M0 10l4-3h6l-2 3z" fill="#444"/><rect x="7" y="5" width="3" height="10" rx="1" fill="#e82828"/><rect x="10.500" y="4" width="4.500" height="11" fill="#555"/><rect x="11.500" y="6" width="2.500" height="8" fill="#eee"/></svg></div>
  <div class="a" style="left:138px;top:11px;border:3px solid transparent;border-top:3px solid #000;border-bottom:0"></div>
 </div>
 <div id="tree" class="a">
  <div class="dot" style="left:7px;top:9px;height:176px"></div>
  <div class="doth" style="left:9px;top:8px;width:8px"></div><div class="doth" style="left:9px;top:24px;width:8px"></div><div class="doth" style="left:9px;top:40px;width:8px"></div><div class="doth" style="left:9px;top:56px;width:8px"></div><div class="doth" style="left:9px;top:72px;width:8px"></div><div class="doth" style="left:9px;top:168px;width:8px"></div><div class="doth" style="left:9px;top:184px;width:8px"></div>
  <div class="dot" style="left:26px;top:80px;height:72px"></div><div class="doth" style="left:28px;top:88px;width:8px"></div><div class="doth" style="left:28px;top:152px;width:8px"></div>
  <div class="dot" style="left:47px;top:96px;height:40px"></div><div class="doth" style="left:48px;top:104px;width:9px"></div><div class="doth" style="left:48px;top:120px;width:9px"></div><div class="doth" style="left:48px;top:136px;width:9px"></div>
  <div class="pm p" style="left:3px;top:4px"></div><div class="pm p" style="left:3px;top:20px"></div><div class="pm p" style="left:3px;top:52px"></div><div class="pm" style="left:3px;top:68px"></div><div class="pm" style="left:22px;top:84px"></div><div class="pm p" style="left:3px;top:164px"></div>
  <!-- icons -->
  <div class="ti" style="left:18px;top:0"><svg width="17" height="16" viewBox="0 0 17 16"><path d="M0.500 5.500h5l1 1.500h9v8h-15z" fill="#f2c838" stroke="#a07c10" stroke-width=".8"/><path d="M1 9h14" stroke="#fae27e"/><rect x="2.500" y="0.500" width="7" height="9" fill="#3a3a3a" stroke="#111" stroke-width=".7"/><path d="M3.500 3h5M3.500 5.500h5" stroke="#ddd" stroke-width="1.200"/><path d="M14.500 1l-2 2.500 1 1.500-5.500 8 1.500 1 5.500-8.500 1.500-.5 .5-2.500z" fill="#2058d0"/></svg></div>
  <div class="ti" style="left:18px;top:16px"><svg width="17" height="16" viewBox="0 0 17 16"><path d="M0.500 5.500h5l1 1.500h9v8h-15z" fill="#f2c838" stroke="#a07c10" stroke-width=".8"/><path d="M1 9h14" stroke="#fae27e"/><rect x="3" y="0.500" width="9" height="3" fill="#222"/><rect x="2" y="4" width="11" height="8" fill="#8a8a8a" stroke="#333" stroke-width=".7"/><rect x="4" y="5.500" width="2.500" height="5" fill="#e4e4e4"/><rect x="8.500" y="5.500" width="2.500" height="5" fill="#444"/></svg></div>
  <div class="ti" style="left:18px;top:32px"><svg width="17" height="16" viewBox="0 0 17 16"><circle cx="7" cy="6.500" r="6.200" fill="#2a74d8"/><path d="M2.500 4c2.500-3 6-1 4.500 2s-4 3-4.500-2zM8 10c1-2 4-2 4.500 0s-3 3-4.500 0z" fill="#3cb44c"/><path d="M5.500 6h6l2 2v7.500h-8z" fill="#f4f4f4" stroke="#556" stroke-width=".8"/><path d="M7 9h3M7 11h2" stroke="#c03030" stroke-width=".8"/><path d="M9.500 11l2 2.500 4.500-6" stroke="#28a030" stroke-width="1.800" fill="none"/></svg></div>
  <div class="ti" style="left:18px;top:48px"><svg width="17" height="16" viewBox="0 0 17 16"><path d="M0.500 5.500h5l1 1.500h9v8h-15z" fill="#f2c838" stroke="#a07c10" stroke-width=".8"/><path d="M1 9h14" stroke="#fae27e"/><path d="M5 0.500h10.500v7.500h-10.500z" fill="#6ad4ee" stroke="#223" stroke-width=".8"/><path d="M3.500 9h12.500l.5 3.500h-14z" fill="#2a2a2a"/><path d="M1 3.500l2.500 3 3.500-5" stroke="#2a9a30" stroke-width="2" fill="none"/></svg></div>
  <div class="ti" style="left:18px;top:64px"><svg width="17" height="16" viewBox="0 0 17 16"><path d="M0.500 4.500h5l1 1.500h9v9.500h-15z" fill="#f8e48c" stroke="#c8a83c" stroke-width=".8"/><circle cx="5" cy="4.500" r="2.800" fill="#f08898"/><circle cx="11.500" cy="3.500" r="2.500" fill="#6cd070"/><path d="M3 8c2-1.500 6-1.500 8 0v4h-8z" fill="#f4dc98" stroke="#d8b860" stroke-width=".6"/><circle cx="13" cy="9" r="1.800" fill="#f0b048"/></svg></div>
  <div class="ti" style="left:37px;top:80px"><svg width="17" height="16" viewBox="0 0 17 16"><path d="M3.500 1.500h5l3 2.500v8h-8z" fill="#e8ecf8" stroke="#7a86a8" stroke-width=".8"/><path d="M6 0.500h5l3 2.500v9h-8z" fill="#fff" stroke="#7a86a8" stroke-width=".8"/><path d="M7.500 4h4M7.500 6h5" stroke="#9ab" stroke-width=".7"/><path d="M0.500 7.500h5l1 1.500h9.500v6.500h-15.500z" fill="#ecc850" stroke="#9a7a18" stroke-width=".8"/><path d="M1 11h14.500" stroke="#f8e490"/></svg></div>
  <div class="ti" style="left:59px;top:96px"><svg width="14" height="16" viewBox="0 0 14 16"><path d="M0.500 0.500h8.500l3.500 3.500v11.500h-12z" fill="#f4f8ff" stroke="#8a96ac" stroke-width=".9"/><path d="M9 0.500v3.500h3.500" fill="#dfe6f2" stroke="#8a96ac" stroke-width=".7"/><g transform="translate(0,.5)"><path d="M1.500 8h2M9.500 8h2" stroke="#e01818" stroke-width="1.200"/><path d="M2.500 8l2.700-2.800v5.600zM10.500 8l-2.700-2.800v5.600z" fill="#e01818"/><path d="M5.400 4.800v6.400M7.600 4.800v6.400" stroke="#e01818" stroke-width="1"/></g></svg></div>
  <div class="ti" style="left:59px;top:112px"><svg width="14" height="16" viewBox="0 0 14 16"><path d="M0.500 0.500h8.500l3.500 3.500v11.500h-12z" fill="#f4f8ff" stroke="#8a96ac" stroke-width=".9"/><path d="M9 0.500v3.500h3.500" fill="#dfe6f2" stroke="#8a96ac" stroke-width=".7"/><g transform="translate(0,.5)"><path d="M1.500 8h2M9.500 8h2" stroke="#e01818" stroke-width="1.200"/><path d="M2.500 8l2.700-2.800v5.600zM10.500 8l-2.700-2.800v5.600z" fill="#e01818"/><path d="M5.400 4.800v6.400M7.600 4.800v6.400" stroke="#e01818" stroke-width="1"/></g></svg></div>
  <div class="ti" style="left:59px;top:128px"><svg width="14" height="16" viewBox="0 0 14 16"><path d="M0.500 0.500h8.500l3.500 3.500v11.500h-12z" fill="#f4f8ff" stroke="#8a96ac" stroke-width=".9"/><path d="M9 0.500v3.500h3.500" fill="#dfe6f2" stroke="#8a96ac" stroke-width=".7"/><g transform="translate(0,.5)"><path d="M1.500 8h2M9.500 8h2" stroke="#e01818" stroke-width="1.200"/><path d="M2.500 8l2.700-2.800v5.600zM10.500 8l-2.700-2.800v5.600z" fill="#e01818"/><path d="M5.400 4.800v6.400M7.600 4.800v6.400" stroke="#e01818" stroke-width="1"/></g></svg></div>
  <div class="ti" style="left:37px;top:144px"><svg width="17" height="16" viewBox="0 0 17 16"><path d="M3.500 1.500h5l3 2.500v8h-8z" fill="#e8ecf8" stroke="#7a86a8" stroke-width=".8"/><path d="M6 0.500h5l3 2.500v9h-8z" fill="#fff" stroke="#7a86a8" stroke-width=".8"/><path d="M7.500 4h4M7.500 6h5" stroke="#9ab" stroke-width=".7"/><path d="M0.500 7.500h5l1 1.500h9.500v6.500h-15.500z" fill="#ecc850" stroke="#9a7a18" stroke-width=".8"/><path d="M1 11h14.500" stroke="#f8e490"/></svg></div>
  <div class="ti" style="left:18px;top:160px"><svg width="17" height="16" viewBox="0 0 17 16"><path d="M0.500 5.500h5l1 1.500h9v8h-15z" fill="#f2c838" stroke="#a07c10" stroke-width=".8"/><path d="M1 9h14" stroke="#fae27e"/><rect x="4" y="0.500" width="10" height="11" rx="1" fill="#333" stroke="#111" stroke-width=".6"/><circle cx="8" cy="8" r="4.200" fill="#e04828"/><path d="M8 8V3.800A4.200 4.200 0 0 0 3.800 8z" fill="#4898e8"/><path d="M8 8H3.800A4.200 4.200 0 0 0 10 11.700z" fill="#48b848"/></svg></div>
  <div class="ti" style="left:18px;top:176px"><svg width="17" height="16" viewBox="0 0 17 16"><path d="M0.500 5.500h5l1 1.500h9v8h-15z" fill="#f2c838" stroke="#a07c10" stroke-width=".8"/><path d="M1 9h14" stroke="#fae27e"/><rect x="3.500" y="0.500" width="11" height="9" fill="#fff" stroke="#222" stroke-width=".8"/><rect x="3.500" y="0.500" width="11" height="4" fill="#222"/><path d="M3 12.500h4M5 10.500v4" stroke="#fff" stroke-width="1.600"/><rect x="9" y="11" width="5" height="3" fill="#fff"/></svg></div>
  <!-- labels -->
  <span class="tr" style="left:39px;top:0">参数</span>
  <span class="tr" style="left:39px;top:16px">智能功能模块</span>
  <span class="tr" style="left:39px;top:32px">全局软元件注释</span>
  <span class="tr" style="left:39px;top:48px">程序设置</span>
  <span class="tr" style="left:39px;top:64px">程序部件</span>
  <span class="tr" style="left:58px;top:80px">程序</span>
  <span class="tr mono" style="left:77px;top:96px;font-size:10px;font-weight:bold">MAIN</span>
  <span class="tr" style="left:77px;top:112px">轨道车<span class="mono" style="font-size:10px">1</span></span>
  <span class="tr" style="left:75px;top:128px;background:#ece9d8;padding:0 2px">轨道车<span class="mono" style="font-size:10px">2</span></span>
  <span class="tr" style="left:58px;top:144px">局部软元件注释</span>
  <span class="tr" style="left:39px;top:160px">软元件存储器</span>
  <span class="tr" style="left:39px;top:176px">软元件初始值</span>
 </div>
 <!-- outlook-bar bottom -->
 <div class="a" style="left:0;top:489px;width:179px;height:7px;background:linear-gradient(#b4b4cc,#8c8cac)"><div class="a" style="left:72px;top:2px;width:34px;height:3px;background:repeating-linear-gradient(115deg,#222 0,#222 1.500px,#fff 1.500px,#fff 3px,transparent 3px,transparent 4px)"></div></div>
 <div class="obtn" style="top:496px;background:linear-gradient(#fde1a0 0,#fbc868 35%,#f5a932 75%,#ee9a1c 100%)"><b>工程</b>
  <svg class="a" style="left:6px;top:3px" width="26" height="26" viewBox="0 0 26 26"><path d="M6 3l10-2v14l-10 2z" fill="#5a5a5a" stroke="#222" stroke-width=".7"/><path d="M7.500 5l7-1.500v9l-7 1.500z" fill="#8a8a8a"/><path d="M0 18l6-3h12l-4 3z" fill="#3a3a3a"/><rect x="10" y="10" width="5" height="14" rx="1.500" fill="#e82818" stroke="#7a0a00" stroke-width=".6"/><rect x="16" y="9" width="7" height="15" fill="#555" stroke="#222" stroke-width=".6"/><rect x="17.500" y="11" width="4" height="3" fill="#58c0a0"/><rect x="17.500" y="16" width="4" height="6" fill="#ddd"/></svg>
 </div>
 <div class="obtn" style="top:528px;background:linear-gradient(#e9e9f3 0,#d4d4e4 35%,#b3b3cc 75%,#9c9cba 100%)"><b>用户库</b>
  <svg class="a" style="left:5px;top:3px" width="27" height="27" viewBox="0 0 27 27"><path d="M1 4c4-2 8-2 11 1c3-3 7-3 11-1v14c-4-2-8-2-11 1c-3-3-7-3-11-1z" fill="#f4ecd8" stroke="#7a6a4a" stroke-width=".9"/><path d="M12 5v14" stroke="#7a6a4a"/><path d="M3 7c3-1 5-1 7 0M3 10c3-1 5-1 7 0M3 13c3-1 5-1 7 0M14 7c3-1 5-1 7 0M14 10c3-1 5-1 7 0" stroke="#a8a088" stroke-width=".8" fill="none"/><circle cx="19" cy="12" r="3.200" fill="#f0c060"/><path d="M14 25c0-6 3-9 6-9s5 3 5 9z" fill="#88b848"/><path d="M15 17l-3 5" stroke="#e8b050" stroke-width="2.500"/></svg>
 </div>
 <div class="obtn" style="top:560px;height:33px;background:linear-gradient(#e1e1ee 0,#cbcbdd 35%,#aeaec8 75%,#9a9ab8 100%)">
  <svg class="a" style="left:138px;top:8px" width="17" height="17" viewBox="0 0 17 17"><rect x="0.500" y="2.500" width="10" height="11" fill="#d8f0d8" stroke="#28a040" stroke-width="1.200"/><rect x="5" y="1" width="9" height="8" fill="#b8d0e8" stroke="#445"/><rect x="5" y="10" width="11" height="6" fill="#444"/><path d="M6 12h9M6 14h9" stroke="#999" stroke-width=".8"/></svg>
  <svg class="a" style="left:164px;top:10px" width="8" height="6" viewBox="0 0 8 6"><path d="M0.700 0.500L3.200 3L0.700 5.500M4.200 0.500L6.700 3L4.200 5.500" stroke="#000" stroke-width="1.300" fill="none"/></svg>
  <div class="a" style="left:165px;top:19px;border:3px solid transparent;border-top:3px solid #000;border-bottom:0"></div>
 </div>
</div>
<style>
#ed{left:184px;top:25px;width:604px;height:569px;border:1px solid #6e6e6e;border-top-color:#4f4f4f;border-bottom-color:#55627c;background:#fff}
#ed .in{position:absolute;left:0;top:0;width:602px;height:567px;border:2px solid #c4c0a9;border-top-color:#b3af9a;border-right-color:#f0ede0;border-bottom-color:#fbe3c2;overflow:hidden}
#vs{left:578px;top:0;width:20px;height:563px;background:linear-gradient(90deg,#fff 0,#e9e7da 2px,#f1f0e7 6px,#fbfbf7 12px,#fff 17px)}
.sb{position:absolute;left:3px;width:16px;height:16px;border:1px solid #fff;border-radius:3px;background:linear-gradient(135deg,#cad8fb,#bccdf8 60%,#b4c6f5);box-shadow:0 1px 0 #c8d4f0}
</style>
<div class="a" style="left:180px;top:0;width:5px;height:594px;background:#e8e8f3"></div>
<!-- tab strip -->
<div class="a" style="left:185px;top:0;width:603px;height:25px;background:linear-gradient(#f0f0f7,#f6f6fb)"></div>
<span class="a" style="left:233px;top:6px;line-height:16px;font-weight:bold;font-size:12px;white-space:nowrap;letter-spacing:.8px;z-index:4"><span class="mono" style="font-size:10.500px;letter-spacing:0">[PRG]</span>读取</span>
<span class="a" style="left:300px;top:6px;line-height:16px;font-weight:bold;font-size:12px;white-space:nowrap;letter-spacing:.8px;z-index:4">轨道车<span class="mono" style="font-size:10.500px;letter-spacing:0">2</span></span>
<span class="a" style="left:354px;top:6px;line-height:16px;font-weight:bold;font-size:12px;white-space:nowrap;z-index:4"><span class="mono" style="font-size:10.500px">(</span>只<span class="mono" style="font-size:10.500px;letter-spacing:-1.6px">. . .</span></span>
<svg class="a" style="left:740px;top:7px" width="46" height="12" viewBox="0 0 46 12"><path d="M6.500 1.500v8l-4.500-4z" fill="none" stroke="#000"/><path d="M19.500 1.500v8l4.500-4z" fill="none" stroke="#000"/><path d="M33 5h9l-4.500 4.500z" fill="#000"/></svg>
<div id="ed" class="a"><div class="in">
<svg class="a" style="left:0;top:0" width="577" height="563" viewBox="0 0 577 563" shape-rendering="crispEdges">
<g fill="#000"><rect x="45" y="0" width="1" height="81"/><rect x="45" y="162" width="1" height="401"/><rect x="576" y="0" width="1" height="563"/><rect x="64" y="13" width="1" height="11"/><rect x="70" y="13" width="1" height="11"/><path d="M61.2 24.8L73.4 13.6" stroke="#000" stroke-width="1.15" fill="none" shape-rendering="auto"/><rect x="46" y="19" width="18" height="1"/><rect x="107" y="13" width="1" height="11"/><rect x="114" y="13" width="1" height="11"/><rect x="71" y="19" width="36" height="1"/><rect x="151" y="13" width="1" height="11"/><rect x="157" y="13" width="1" height="11"/><rect x="115" y="19" width="36" height="1"/><rect x="194" y="13" width="1" height="11"/><rect x="201" y="13" width="1" height="11"/><rect x="158" y="19" width="36" height="1"/><rect x="238" y="13" width="1" height="11"/><rect x="244" y="13" width="1" height="11"/><rect x="202" y="19" width="36" height="1"/><rect x="281" y="13" width="1" height="11"/><rect x="288" y="13" width="1" height="11"/><rect x="245" y="19" width="36" height="1"/><rect x="325" y="13" width="1" height="11"/><rect x="331" y="13" width="1" height="11"/><rect x="289" y="19" width="36" height="1"/><rect x="332" y="19" width="194" height="1"/><path d="M528.4 14.2Q525.2 17.5 525.3 19.5Q525.4 21.5 528.4 23.6M571.8 14.2Q575.3 17.5 575.4 19.5Q575.2 21.5 571.2 24.2" stroke="#000" stroke-width="1.15" fill="none" shape-rendering="auto"/><rect x="132" y="19" width="1" height="81"/><rect x="133" y="99" width="393" height="1"/><path d="M528.4 94.2Q525.2 97.5 525.3 99.5Q525.4 101.5 528.4 103.6M571.8 94.2Q575.3 97.5 575.4 99.5Q575.2 101.5 571.2 104.2" stroke="#000" stroke-width="1.15" fill="none" shape-rendering="auto"/><rect x="64" y="174" width="1" height="11"/><rect x="70" y="174" width="1" height="11"/><path d="M61.2 185.8L73.4 174.6" stroke="#000" stroke-width="1.15" fill="none" shape-rendering="auto"/><rect x="46" y="180" width="18" height="1"/><rect x="71" y="180" width="455" height="1"/><path d="M528.4 175.2Q525.2 178.5 525.3 180.5Q525.4 182.5 528.4 184.6M571.8 175.2Q575.3 178.5 575.4 180.5Q575.2 182.5 571.2 185.2" stroke="#000" stroke-width="1.15" fill="none" shape-rendering="auto"/><rect x="64" y="254" width="1" height="11"/><rect x="70" y="254" width="1" height="11"/><rect x="46" y="260" width="18" height="1"/><rect x="107" y="254" width="1" height="11"/><rect x="114" y="254" width="1" height="11"/><path d="M104.2 265.8L117.4 254.6" stroke="#000" stroke-width="1.15" fill="none" shape-rendering="auto"/><rect x="71" y="260" width="36" height="1"/><rect x="151" y="254" width="1" height="11"/><rect x="157" y="254" width="1" height="11"/><path d="M148.2 265.8L160.4 254.6" stroke="#000" stroke-width="1.15" fill="none" shape-rendering="auto"/><rect x="115" y="260" width="36" height="1"/><rect x="194" y="254" width="1" height="11"/><rect x="201" y="254" width="1" height="11"/><path d="M191.2 265.8L204.4 254.6" stroke="#000" stroke-width="1.15" fill="none" shape-rendering="auto"/><rect x="158" y="260" width="36" height="1"/><rect x="238" y="254" width="1" height="11"/><rect x="244" y="254" width="1" height="11"/><path d="M235.2 265.8L247.4 254.6" stroke="#000" stroke-width="1.15" fill="none" shape-rendering="auto"/><rect x="202" y="260" width="36" height="1"/><rect x="245" y="260" width="281" height="1"/><path d="M528.4 255.2Q525.2 258.5 525.3 260.5Q525.4 262.5 528.4 264.6M571.8 255.2Q575.3 258.5 575.4 260.5Q575.2 262.5 571.2 265.2" stroke="#000" stroke-width="1.15" fill="none" shape-rendering="auto"/><rect x="64" y="335" width="1" height="11"/><rect x="70" y="335" width="1" height="11"/><rect x="46" y="340" width="18" height="1"/><rect x="107" y="335" width="1" height="11"/><rect x="114" y="335" width="1" height="11"/><path d="M104.2 346.8L117.4 335.6" stroke="#000" stroke-width="1.15" fill="none" shape-rendering="auto"/><rect x="71" y="340" width="36" height="1"/><rect x="151" y="335" width="1" height="11"/><rect x="157" y="335" width="1" height="11"/><rect x="115" y="340" width="36" height="1"/><rect x="158" y="340" width="61" height="1"/><rect x="219" y="260" width="1" height="81"/><rect x="64" y="415" width="1" height="11"/><rect x="70" y="415" width="1" height="11"/><rect x="46" y="421" width="18" height="1"/><rect x="107" y="415" width="1" height="11"/><rect x="114" y="415" width="1" height="11"/><path d="M104.2 426.8L117.4 415.6" stroke="#000" stroke-width="1.15" fill="none" shape-rendering="auto"/><rect x="71" y="421" width="36" height="1"/><rect x="115" y="421" width="17" height="1"/><rect x="64" y="496" width="1" height="11"/><rect x="70" y="496" width="1" height="11"/><rect x="46" y="501" width="18" height="1"/><rect x="107" y="496" width="1" height="11"/><rect x="114" y="496" width="1" height="11"/><path d="M104.2 507.8L117.4 496.6" stroke="#000" stroke-width="1.15" fill="none" shape-rendering="auto"/><rect x="71" y="501" width="36" height="1"/><rect x="115" y="501" width="17" height="1"/><rect x="132" y="340" width="1" height="223"/></g>
<rect x="45" y="81" width="44" height="81" fill="#0c0a62"/>
<rect x="45" y="82" width="43" height="79" fill="#fff"/>
<rect x="47" y="83" width="40" height="77" fill="#0000a0"/>
<rect x="45" y="82" width="1" height="79" fill="#ffffc8"/>
<g style="font:7.4px 'Liberation Sans',sans-serif" fill="#707070" shape-rendering="auto"><text x="67.0" y="9" text-anchor="middle">X50C</text><text x="110.5" y="9" text-anchor="middle">X50D</text><text x="154.0" y="9" text-anchor="middle">X50F</text><text x="197.5" y="9" text-anchor="middle">X517</text><text x="241.0" y="9" text-anchor="middle">X51F</text><text x="284.5" y="9" text-anchor="middle">X527</text><text x="328.0" y="9" text-anchor="middle">M1000</text><text x="529.6" y="20.5">M1002</text><text x="529.6" y="100.5">Y560</text><text x="67.0" y="170" text-anchor="middle">X50F</text><text x="529.6" y="181.5">Y561</text><text x="67.0" y="251" text-anchor="middle">M90</text><text x="110.5" y="251" text-anchor="middle">M401</text><text x="154.0" y="251" text-anchor="middle">M402</text><text x="197.5" y="251" text-anchor="middle">M403</text><text x="241.0" y="251" text-anchor="middle">L82</text><text x="529.6" y="261.5">L81</text><text x="67.0" y="331" text-anchor="middle">L1521</text><text x="110.5" y="331" text-anchor="middle">M401</text><text x="154.0" y="331" text-anchor="middle">M1002</text><text x="67.0" y="411" text-anchor="middle">L1522</text><text x="110.5" y="411" text-anchor="middle">M402</text><text x="67.0" y="492" text-anchor="middle">L1523</text><text x="110.5" y="492" text-anchor="middle">M403</text><text x="42.3" y="20" text-anchor="end">0</text><text x="42.3" y="181" text-anchor="end">11</text><text x="42.3" y="261" text-anchor="end">13</text></g>
</svg>
 <div id="vs" class="a">
  <div class="sb" style="top:1px"><svg class="a" style="left:2px;top:3px" width="9" height="7" viewBox="0 0 9 7"><path d="M1 5.500L4.500 2L8 5.500" stroke="#4d6185" stroke-width="2" fill="none"/></svg></div>
  <div class="sb" style="top:18px;height:17px"><div class="a" style="left:3px;top:4px;width:8px;height:8px;background:repeating-linear-gradient(#8fa6e8 0,#8fa6e8 1px,transparent 1px,transparent 2px)"></div></div>
  <div class="sb" style="top:545px"><svg class="a" style="left:2px;top:4px" width="9" height="7" viewBox="0 0 9 7"><path d="M1 1.500L4.500 5L8 1.500" stroke="#4d6185" stroke-width="2" fill="none"/></svg></div>
 </div>
</div></div>
<svg class="a" style="left:184px;top:0;z-index:3" width="244" height="27" viewBox="0 0 244 27">
 <defs><linearGradient id="tg" x1="0" y1="0" x2="0" y2="1"><stop offset="0.1" stop-color="#fffefb"/><stop offset=".4" stop-color="#fdeccd"/><stop offset=".75" stop-color="#fcd193"/><stop offset="1" stop-color="#fbc070"/></linearGradient>
 <linearGradient id="tg2" x1="0" y1="0" x2="1" y2="0"><stop offset="0" stop-color="#fbc070" stop-opacity=".85"/><stop offset=".12" stop-color="#fbc070" stop-opacity="0"/></linearGradient></defs>
 <path d="M1 26L2.500 23L26 3.500H237.500Q240.500 3.500 240.500 6.500V26z" fill="url(#tg)"/>
 <path d="M1 26L2.500 23L26 3.500H237.500Q240.500 3.500 240.500 6.500V26z" fill="url(#tg2)"/>
 <path d="M1.500 26V23.500L26 3.500H237.500Q240.500 3.500 240.500 6.500V26" fill="none" stroke="#6f7895" shape-rendering="auto"/>
</svg>
<svg class="a" style="left:215px;top:8px;z-index:4" width="13" height="15" viewBox="0 0 13 15"><path d="M0.500 0.500h7.500l3.500 3.500v10.500h-11z" fill="#fff" stroke="#9a9aa8" stroke-width=".9"/><path d="M8 0.500v3.500h3.500" fill="#e4e4ec" stroke="#9a9aa8" stroke-width=".7"/><path d="M1.500 8h2M9.500 8h2" stroke="#e01818" stroke-width="1.200"/><path d="M2.500 8l2.700-2.800v5.600zM10.500 8l-2.700-2.800v5.600z" fill="#e01818"/><path d="M5.400 4.800v6.400M7.600 4.800v6.400" stroke="#e01818" stroke-width="1"/></svg>
<div class="a" style="left:405px;top:7px;width:15px;height:15px;border:1px solid #f6f0e0;border-right-color:#c9b998;border-bottom-color:#c9b998;background:#fcf8ec;z-index:4"><svg class="a" style="left:2px;top:2px" width="9" height="9" viewBox="0 0 9 9"><path d="M1 1L8 8M8 1L1 8" stroke="#8a8676" stroke-width="1.900"/></svg></div>
<div class="a" style="left:788px;top:0;width:5px;height:594px;background:#e8e8f3"></div>
<style>
#rp{left:793px;top:0;width:179px;height:594px;background:#ece9d8}
#rp .lb{position:absolute;left:15px;line-height:14px;white-space:nowrap;font-size:12px}
#rp .lb i,#rp .rt i{font-style:normal;font-family:"Liberation Sans",sans-serif;font-size:11px}
.inp{position:absolute;left:96px;width:90px;background:#fff;border:1px solid #7f7f78;border-right-color:#fff;border-bottom-color:#fff;box-shadow:inset 1px 1px 0 #404040}
.gb{position:absolute;border:1px solid #d0d0bf;border-radius:3px}
.gb>span{position:absolute;top:-8px;left:5px;background:#ece9d8;padding:0 2px;line-height:14px;font-size:12px;white-space:nowrap}
.rd{position:absolute;width:12px;height:12px;border-radius:50%;background:#fff;border:1px solid #808080;border-right-color:#fff;border-bottom-color:#fff;box-shadow:inset 1px 1px 0 #404040}
.ck{position:absolute;width:13px;height:13px;background:#fff;border:1px solid #808080;border-right-color:#fff;border-bottom-color:#fff;box-shadow:inset 1px 1px 0 #404040}
.rt{position:absolute;line-height:14px;white-space:nowrap;font-size:12px}
.tabx{position:absolute;border:1px solid #fff;border-right-color:#716f64;border-bottom:0;background:#ece9d8;line-height:14px;font-size:12px;text-align:center;white-space:nowrap;box-shadow:inset -1px 0 0 #aca899}
.spb{position:absolute;width:17px;height:17px;background:#ece9d8;border:1px solid #fff;border-right-color:#716f64;border-bottom-color:#716f64;box-shadow:inset -1px -1px 0 #aca899}
</style>
<div id="rp" class="a">
 <div class="cap" style="left:0;top:0;width:179px"><div class="grip" style="left:4px;top:5px;height:16px"></div><b style="left:13px;letter-spacing:.5px">搜索<span style="font-family:'Liberation Sans',sans-serif">/</span>替换</b>
  <svg class="a" style="left:148px;top:6px" width="8" height="10" viewBox="0 0 8 10" shape-rendering="crispEdges"><path d="M1.500 0.500h4v4h-4zM4.500 0.500v4M0 5.500h7M3.500 6v4" stroke="#000" fill="none"/></svg>
  <svg class="a" style="left:164px;top:7px" width="8" height="8" viewBox="0 0 8 8"><path d="M0.700 0.700L7.300 7.300M7.300 0.700L0.700 7.300" stroke="#000" stroke-width="1.500"/></svg>
 </div>
 <!-- tab page frame -->
 <div class="a" style="left:2px;top:46px;width:174px;height:545px;border:1px solid #fff;border-right-color:#716f64;border-bottom-color:#716f64;box-shadow:inset -1px -1px 0 #aca899"></div>
 <div class="tabx" style="left:53px;top:29px;width:41px;height:18px;padding-top:3px;text-align:left;padding-left:3px">指令</div>
 <div class="tabx" style="left:94px;top:29px;width:48px;height:18px;padding-top:3px">字符串</div>
 <div class="tabx" style="left:2px;top:26px;width:52px;height:22px;padding-top:3px;border-radius:2px 2px 0 0;z-index:2">软元件</div>
 <div class="spb" style="left:142px;top:27px"><div class="a" style="left:3px;top:3px;border:4px solid transparent;border-right:5px solid #000;border-left:0"></div></div>
 <div class="spb" style="left:159px;top:27px"><div class="a" style="left:6px;top:3px;border:4px solid transparent;border-left:5px solid #000;border-right:0"></div></div>
 <!-- dialog, clipped -->
 <div class="a" style="left:0;top:48px;width:172px;height:540px;overflow:hidden">
  <span class="lb" style="top:16px">搜索位置<i>(<u>D</u>)</i></span>
  <span class="lb" style="top:41px">搜索软元件<i>(<u>N</u>)</i></span>
  <span class="lb" style="top:67px">替换软元件<i>(<u>V</u>)</i></span>
  <span class="lb" style="top:94px;color:#aca899;text-shadow:1px 1px 0 #fff">软元件点数<i>(<u>P</u>)</i></span>
  <div class="inp" style="top:11px;height:21px"><span class="a" style="left:2px;top:2px;line-height:14px;font-size:12px;white-space:nowrap"><i style="font-style:normal;font-size:11px">(</i>全工程<i style="font-style:normal;font-size:11px">)</i></span></div>
  <div class="inp" style="top:38px;height:21px"></div>
  <div class="inp" style="top:64px;height:21px"></div>
  <div class="inp" style="top:91px;height:23px;width:57px;background:#ece9d8;border-right-color:#fff"><span class="a" style="left:3px;top:4px;line-height:13px;font-size:11px;color:#aca899">1</span></div>
  <div class="spb" style="left:156px;top:92px;width:16px;height:11px"><div class="a" style="left:4px;top:2px;border:3px solid transparent;border-bottom:3px solid #aca899;border-top:0"></div></div>
  <div class="spb" style="left:156px;top:103px;width:16px;height:11px"><div class="a" style="left:4px;top:3px;border:3px solid transparent;border-top:3px solid #aca899;border-bottom:0"></div></div>
  <div class="gb" style="left:15px;top:127px;width:88px;height:81px"><span>搜索方向</span></div>
  <div class="rd" style="left:21px;top:141px"><div class="a" style="left:3px;top:3px;width:4px;height:4px;border-radius:50%;background:#000"></div></div>
  <div class="rd" style="left:21px;top:162px"></div>
  <div class="rd" style="left:21px;top:182px"></div>
  <span class="rt" style="left:37px;top:141px">从起始<i>(<u>T</u>)</i></span>
  <span class="rt" style="left:37px;top:162px">向下<i>(<u>O</u>)</i></span>
  <span class="rt" style="left:37px;top:182px">向上<i>(<u>U</u>)</i></span>
  <div class="gb" style="left:111px;top:127px;width:90px;height:94px"><span>选项</span></div>
  <div class="ck" style="left:117px;top:142px"></div>
  <div class="ck" style="left:117px;top:163px"></div>
  <div class="ck" style="left:117px;top:184px"></div>
  <span class="rt" style="left:134px;top:142px">数位<i>(<u>I</u>)</i></span>
  <span class="rt" style="left:134px;top:163px">多个字符串</span>
  <span class="rt" style="left:134px;top:184px">按<i>Enter</i>键</span>
  <span class="rt" style="left:134px;top:197px">连续搜索</span>
  <div class="a" style="left:9px;top:518px;width:159px;height:17px;border:1px solid #aca899;border-right-color:#fff;border-bottom-color:#fff"></div>
 </div>
</div>
</div><!-- /main -->
<style>
#st{left:0;top:695px;width:972px;height:19px;overflow:hidden;background:linear-gradient(#e4e1d0 0,#ece9d8 3px,#ece9d8 14px,#e2dfcb 19px)}
#st span{position:absolute;top:3px;line-height:14px;white-space:nowrap;font-size:12px}
#st em{position:absolute;top:3px;width:1px;height:14px;background:#c5c2b2;box-shadow:1px 0 0 #fff}
</style>
<div id="st" class="a">
 <em style="left:257px"></em><span style="left:262px">简体中文</span>
 <em style="left:355px"></em><span style="left:360px">无标签</span>
 <em style="left:445px"></em>
 <em style="left:691px"></em><span class="mono" style="left:696px;font-size:10px">Q03UDE</span>
 <em style="left:799px"></em><span style="left:804px">本站</span>
 <em style="left:952px"></em><span style="left:956px">数字</span>
 <svg class="a" style="left:957px;top:6px" width="13" height="13" viewBox="0 0 13 13"><path d="M12 2L2 12M12 6L6 12M12 10L10 12" stroke="#b8b4a0" stroke-width="1.500"/><path d="M13 3L3 13M13 7L7 13M13 11L11 13" stroke="#fff" stroke-width="1"/></svg>
</div>
<div class="a" style="left:0;top:714px;width:974px;height:4px;background:linear-gradient(#c3cff2 0,#7e94e2 1px,#7a8fdf 4px)"></div>
</div>
</body>
</html>
